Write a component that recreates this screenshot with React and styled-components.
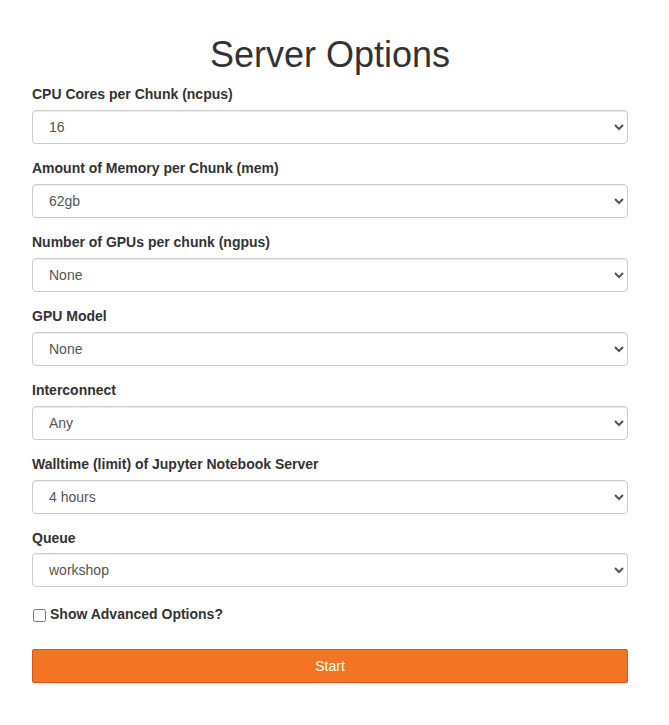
import React from "react";
import styled, { createGlobalStyle } from "styled-components";

const GlobalStyle = createGlobalStyle`
  body {
    margin: 0;
    background: #fff;
    font-family: "Liberation Sans", Arial, sans-serif;
    font-size: 14px;
    line-height: 1.42857;
    color: #333;
  }
`;

const Page = styled.div`
  width: 596px;
  padding: 0 32px;
`;

const Title = styled.h1`
  margin: 35px 0 10px;
  text-align: center;
  font-size: 36px;
  font-weight: 400;
  line-height: 1.1;
  color: #333;
`;

const Field = styled.div`
  margin-bottom: 15px;
`;

const Label = styled.label`
  display: block;
  margin-bottom: 5px;
  font-weight: 700;
  font-size: 14px;
`;

const Select = styled.select`
  display: block;
  width: 100%;
  height: 34px;
  padding: 6px 12px;
  font-family: inherit;
  font-size: 14px;
  color: #555;
  background: #fff;
  border: 1px solid #ccc;
  border-radius: 4px;
  box-shadow: inset 0 1px 1px rgba(0, 0, 0, 0.075);
`;

const CheckRow = styled.label`
  display: flex;
  align-items: center;
  gap: 4px;
  padding-top: 3px;
  margin: 0 0 24px;
  font-weight: 700;
`;

const Check = styled.input`
  margin: 0 0 0 1px;
  width: 13px;
  height: 13px;
`;

const StartButton = styled.button`
  display: block;
  width: 100%;
  height: 34px;
  padding: 6px 12px;
  font-family: inherit;
  font-size: 14px;
  color: #fff;
  background: #f37524;
  border: 1px solid #e34f21;
  border-radius: 2px;
`;

const fields = [
  ["CPU Cores per Chunk (ncpus)", "16"],
  ["Amount of Memory per Chunk (mem)", "62gb"],
  ["Number of GPUs per chunk (ngpus)", "None"],
  ["GPU Model", "None"],
  ["Interconnect", "Any"],
  ["Walltime (limit) of Jupyter Notebook Server", "4 hours"],
  ["Queue", "workshop"],
];

export default function App() {
  return (
    <Page>
      <GlobalStyle />
      <Title>Server Options</Title>
      {fields.map(([label, value]) => (
        <Field key={label}>
          <Label>{label}</Label>
          <Select defaultValue={value}>
            <option>{value}</option>
          </Select>
        </Field>
      ))}
      <CheckRow>
        <Check type="checkbox" />
        Show Advanced Options?
      </CheckRow>
      <StartButton>Start</StartButton>
    </Page>
  );
}
